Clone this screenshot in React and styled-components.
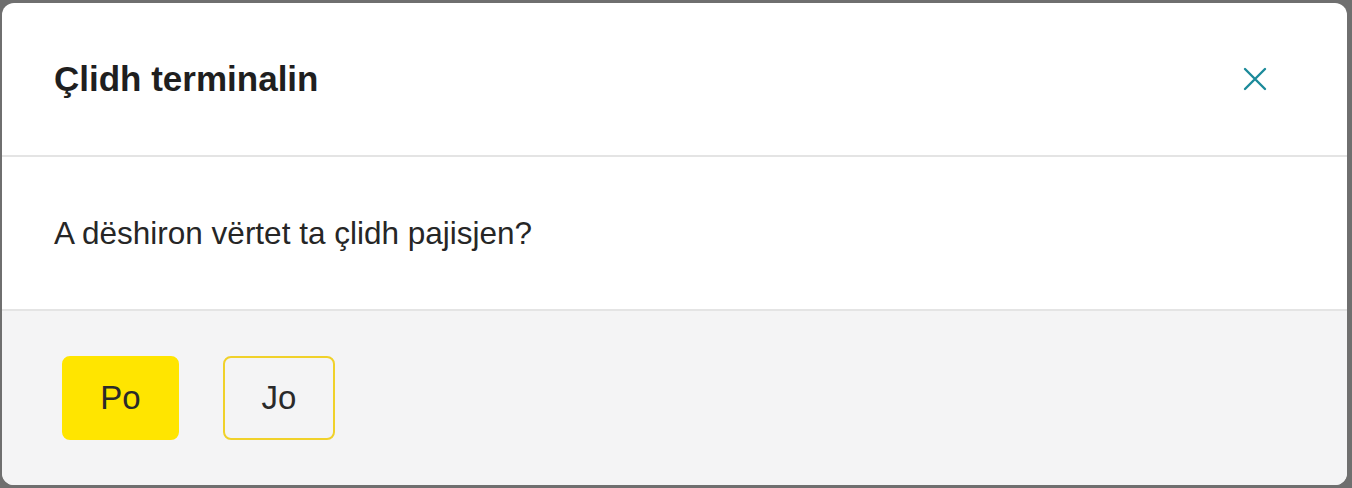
import React from "react";
import styled, { createGlobalStyle } from "styled-components";

const Global = createGlobalStyle`
  html, body { margin: 0; padding: 0; background: #6f6f6f; }
  body { font-family: "Liberation Sans", Arial, sans-serif; }
  #root { height: 488px; }
`;

const Backdrop = styled.div`
  height: 488px;
  box-sizing: border-box;
  padding: 3px 5px 3px 2px;
  display: flex;
`;

const Dialog = styled.div`
  flex: 1;
  background: #ffffff;
  border-radius: 12px;
  overflow: hidden;
  display: flex;
  flex-direction: column;
`;

const Header = styled.div`
  height: 154px;
  box-sizing: border-box;
  border-bottom: 2px solid #e4e4e4;
  display: flex;
  align-items: center;
  justify-content: space-between;
  padding: 0 78px 0 52px;
`;

const Title = styled.h2`
  margin: 0;
  font-size: 35px;
  font-weight: 700;
  color: #1f1f1f;
`;

const CloseButton = styled.button`
  border: none;
  background: transparent;
  padding: 0;
  width: 28px;
  height: 28px;
  display: flex;
  align-items: center;
  justify-content: center;
  cursor: pointer;
`;

const Body = styled.div`
  height: 155px;
  box-sizing: border-box;
  border-bottom: 2px solid #e4e4e4;
  display: flex;
  align-items: center;
  padding: 2px 52px 0;
  font-size: 31.5px;
  color: #262626;
`;

const Footer = styled.div`
  flex: 1;
  background: #f4f4f5;
  display: flex;
  align-items: flex-start;
  gap: 44px;
  padding: 45px 60px;
`;

const Button = styled.button`
  height: 84px;
  width: ${(p) => p.$w}px;
  box-sizing: border-box;
  border-radius: 8px;
  border: 2px solid ${(p) => (p.$primary ? "#ffe500" : "#f0d12a")};
  background: ${(p) => (p.$primary ? "#ffe500" : "transparent")};
  font-family: "Liberation Sans", Arial, sans-serif;
  font-size: 33px;
  color: #2a2a2a;
  cursor: pointer;
`;

export default function App() {
  return (
    <>
      <Global />
      <Backdrop>
        <Dialog>
          <Header>
            <Title>Çlidh terminalin</Title>
            <CloseButton aria-label="Mbyll">
              <svg width="24" height="24" viewBox="0 0 24 24">
                <path
                  d="M2 2 L22 22 M22 2 L2 22"
                  stroke="#1b8a9a"
                  strokeWidth="2.4"
                  strokeLinecap="round"
                />
              </svg>
            </CloseButton>
          </Header>
          <Body>A dëshiron vërtet ta çlidh pajisjen?</Body>
          <Footer>
            <Button $primary $w={117}>Po</Button>
            <Button $w={112}>Jo</Button>
          </Footer>
        </Dialog>
      </Backdrop>
    </>
  );
}
